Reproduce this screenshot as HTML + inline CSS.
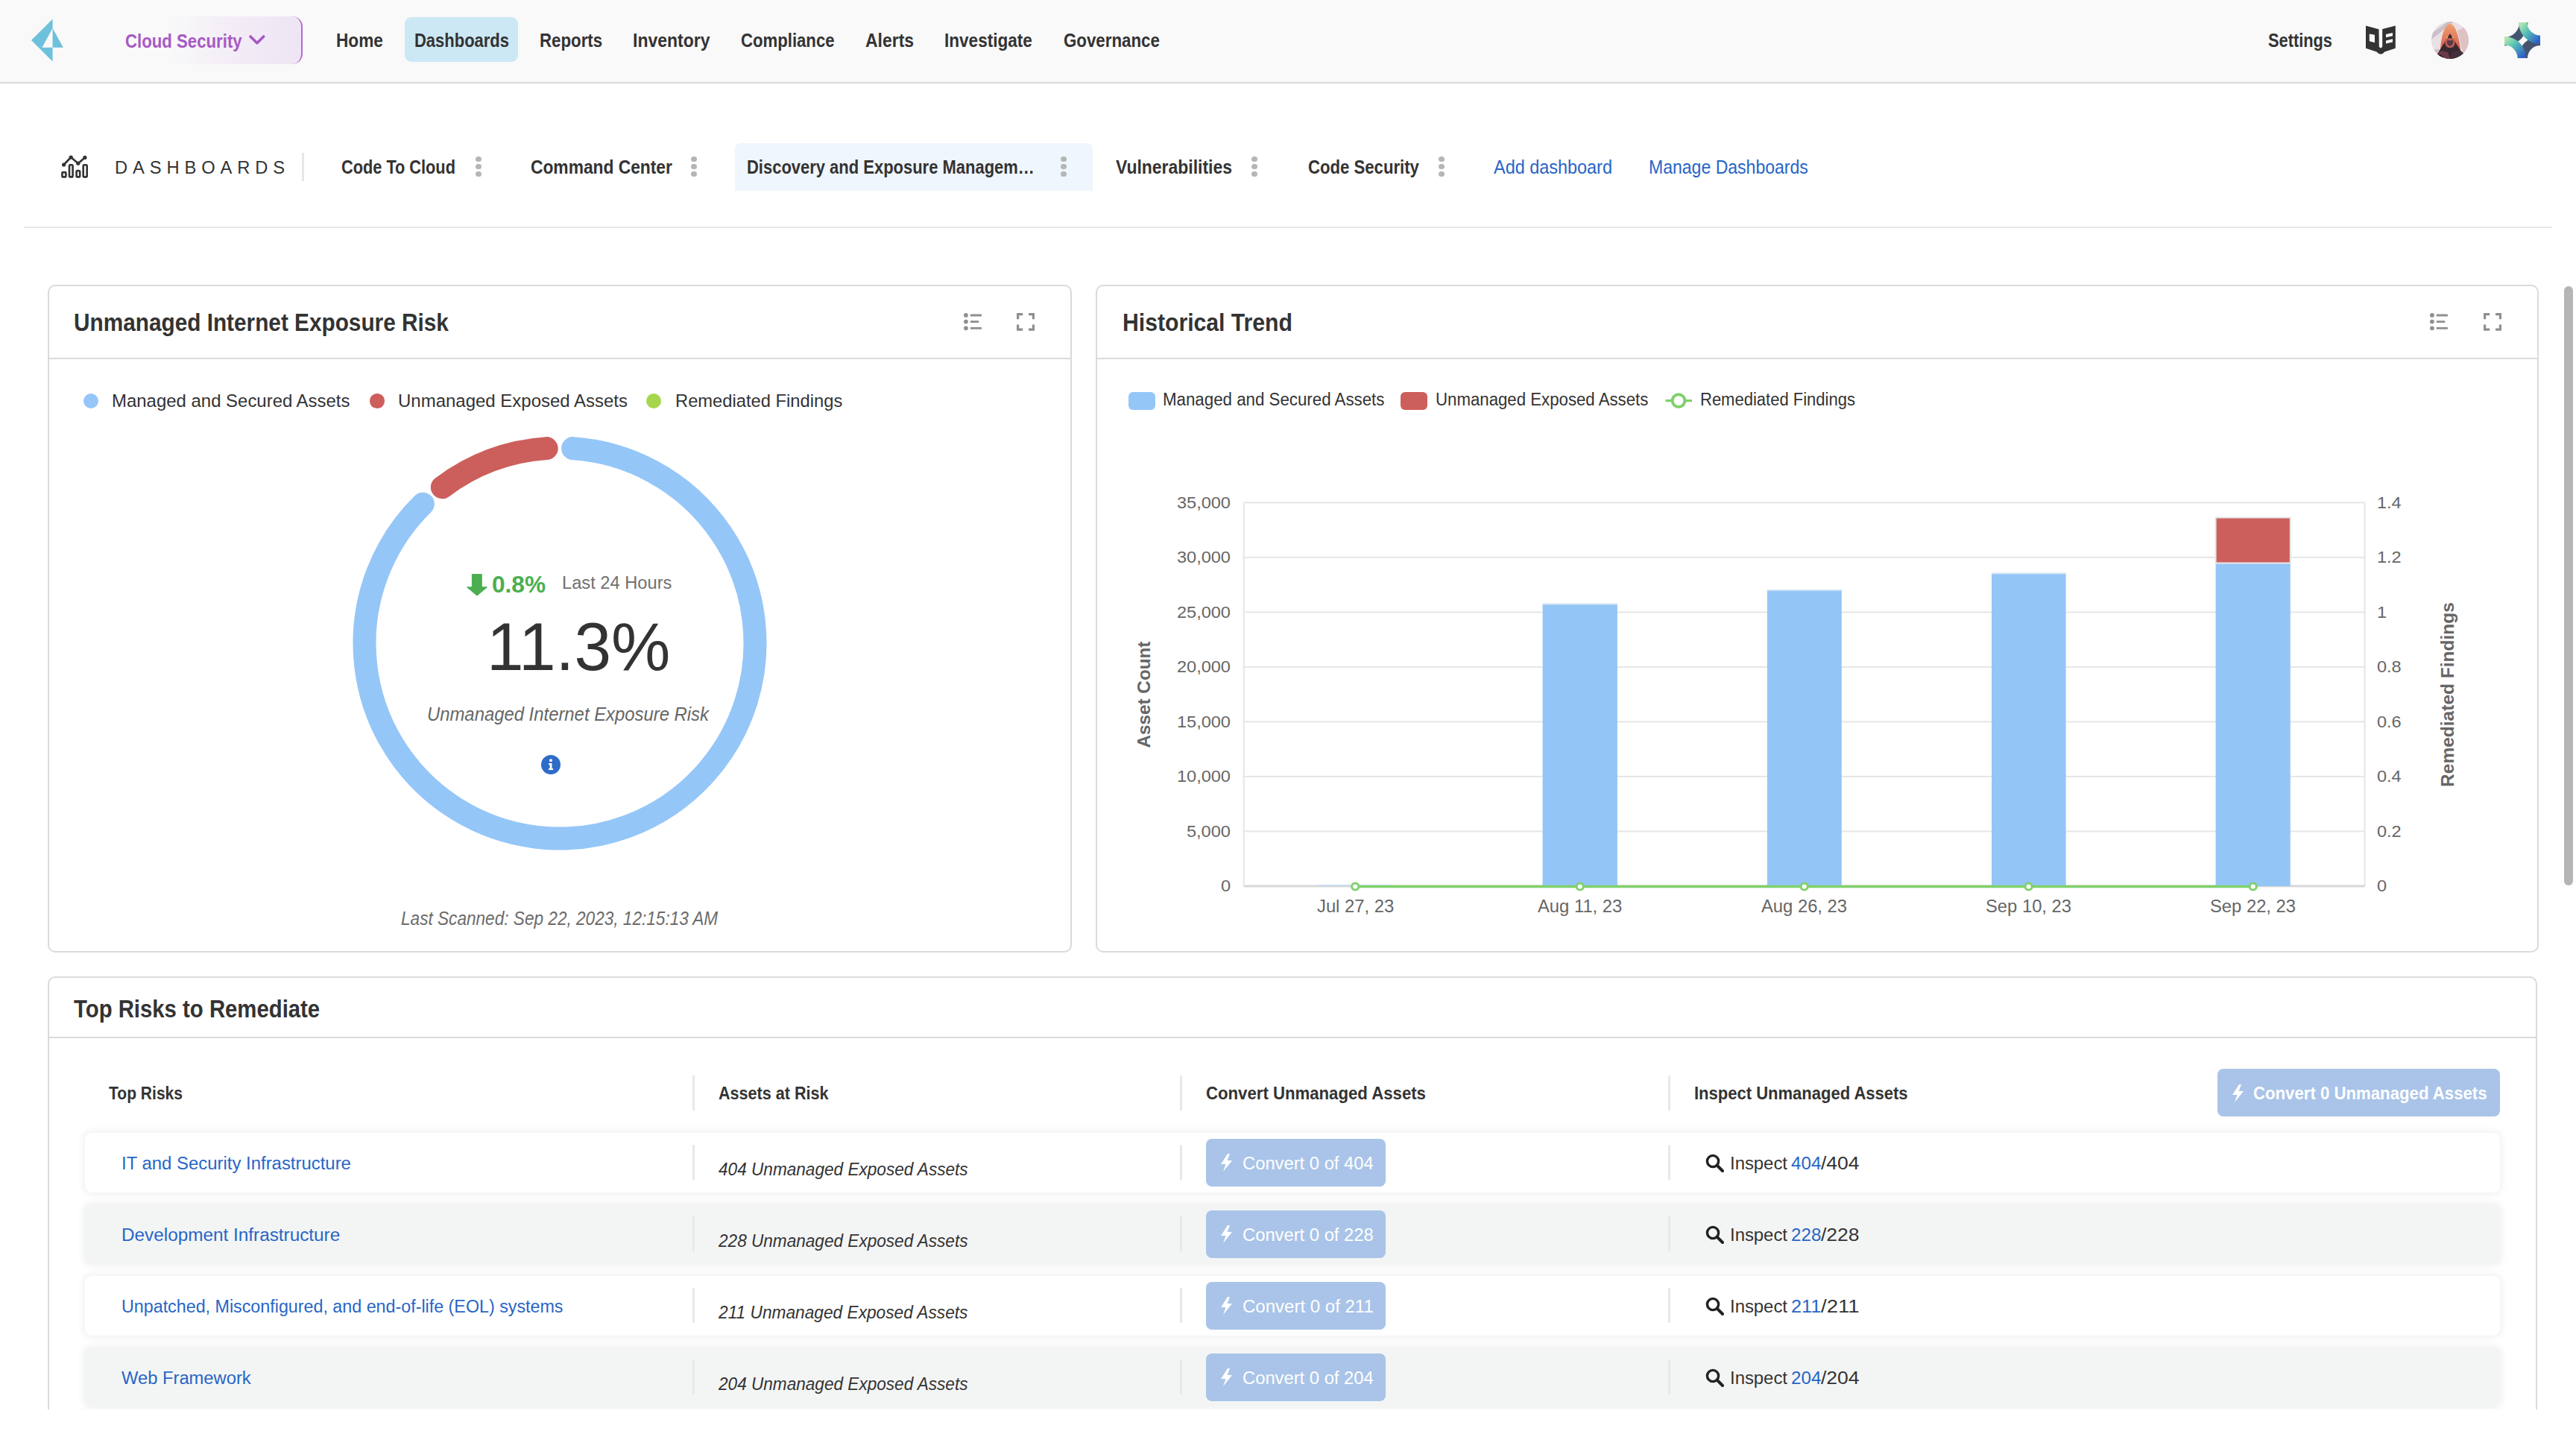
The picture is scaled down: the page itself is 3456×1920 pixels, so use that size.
<!DOCTYPE html>
<html><head><meta charset="utf-8"><title>Dashboards</title>
<style>
html,body{margin:0;padding:0;}
body{width:3456px;height:1920px;position:relative;overflow:hidden;background:#ffffff;font-family:"Liberation Sans",sans-serif;}
.t{position:absolute;white-space:pre;transform-origin:0 50%;}
.b{position:absolute;}
svg.b{overflow:visible;}
</style></head><body>
<div class="b" style="left:0px;top:0px;width:3456px;height:110px;background:#f9f9f9;border-bottom:2px solid #d8dbdb;box-sizing:border-box;height:112px;"></div>
<svg class="b" style="left:0;top:0" width="120" height="110" viewBox="0 0 120 110"><path fill="#6ec1dc" d="M70.6 25.6 L42 54 L70.6 82.4 L70.6 63.75 L84.8 63.75 L70.6 37.7 Z M70.6 37.7 L56.5 63.75 L70.6 63.75 Z" fill-rule="evenodd"/></svg>
<div class="b" style="left:112px;top:22px;width:294px;height:64px;border-radius:14px;background:linear-gradient(90deg,rgba(249,249,249,0) 0%,rgba(249,249,249,0) 40%,#f4eef7 65%,#eee4f4 100%);"></div>
<div class="b" style="left:390px;top:22px;width:16px;height:64px;border-radius:0 14px 14px 0;border-right:2px solid #b46ad0;box-sizing:border-box;"></div>
<div class="t" style="left:167.80px;top:42.65px;font-size:24.860px;line-height:24.860px;color:#a759c4;font-weight:bold;transform:scaleX(0.8931);">Cloud Security</div>
<svg class="b" style="left:330.75px;top:44.25px" width="30" height="24" viewBox="0 0 30 24"><path d="M5 5 L13.85 13.85 L22.7 5" fill="none" stroke="#a759c4" stroke-width="3.6" stroke-linecap="round" stroke-linejoin="round"/></svg>
<div class="b" style="left:543px;top:23px;width:152px;height:60px;background:#cce8f4;border-radius:9px;"></div>
<div class="t" style="left:451.30px;top:42.41px;font-size:25.140px;line-height:25.140px;color:#333333;font-weight:bold;transform:scaleX(0.9008);">Home</div>
<div class="t" style="left:555.60px;top:42.41px;font-size:25.140px;line-height:25.140px;color:#333333;font-weight:bold;transform:scaleX(0.8747);">Dashboards</div>
<div class="t" style="left:723.90px;top:42.41px;font-size:25.140px;line-height:25.140px;color:#333333;font-weight:bold;transform:scaleX(0.8856);">Reports</div>
<div class="t" style="left:849.40px;top:42.41px;font-size:25.140px;line-height:25.140px;color:#333333;font-weight:bold;transform:scaleX(0.9149);">Inventory</div>
<div class="t" style="left:994.30px;top:42.41px;font-size:25.140px;line-height:25.140px;color:#333333;font-weight:bold;transform:scaleX(0.8815);">Compliance</div>
<div class="t" style="left:1161.30px;top:42.41px;font-size:25.140px;line-height:25.140px;color:#333333;font-weight:bold;transform:scaleX(0.9134);">Alerts</div>
<div class="t" style="left:1267.40px;top:42.41px;font-size:25.140px;line-height:25.140px;color:#333333;font-weight:bold;transform:scaleX(0.8976);">Investigate</div>
<div class="t" style="left:1426.70px;top:42.41px;font-size:25.140px;line-height:25.140px;color:#333333;font-weight:bold;transform:scaleX(0.8871);">Governance</div>
<div class="t" style="left:3043.00px;top:42.41px;font-size:25.140px;line-height:25.140px;color:#333333;font-weight:bold;transform:scaleX(0.8671);">Settings</div>
<svg class="b" style="left:3165px;top:25px" width="60" height="60" viewBox="0 0 60 60"><path fill="#333" d="M9 9.4 L26.5 14.3 L26.8 37.5 Q29 41.5 31.2 37.5 L31.2 13.9 L48.8 9.4 L48.8 39.8 L34.4 44.4 Q29 51 23.5 44.4 L9 39.8 Z"/><path fill="#f9f9f9" d="M13.8 20.5 L21 21.8 L21 32.3 L13.8 30.2 Z M36 21 L45 18.9 L45 23.3 L36 25.2 Z M36 29.4 L45 27.3 L45 31.4 L36 33.5 Z"/></svg>
<svg class="b" style="left:3262px;top:29px" width="50" height="50" viewBox="0 0 50 50"><defs><clipPath id="av"><circle cx="25" cy="25" r="25"/></clipPath><linearGradient id="hood" x1="0" y1="0" x2="0" y2="1"><stop offset="0" stop-color="#f0a070"/><stop offset="1" stop-color="#d65a4c"/></linearGradient></defs><g clip-path="url(#av)"><rect width="50" height="50" fill="#eadfe2"/><path d="M0 16 L22 0 L30 0 L0 24 Z" fill="#cbbfca"/><path d="M35 12 L44 8 L52 20 L52 46 L42 42 Z" fill="#dcc2c3"/><path d="M0 45 L20 36 L0 38 Z" fill="#cbbfca"/><path d="M12 38 C13 20 18 3 25 3 C32 3 37 20 39 38 Z" fill="url(#hood)"/><path d="M25 16 L4 50 L46 50 Z" fill="#3a2830"/><circle cx="25" cy="28.5" r="6.6" fill="#c4605a"/><path d="M20.5 26 L23 24.5 L25 26 L27 24.5 L29.5 26 L28.5 31 L25 33 L21.5 31 Z" fill="#5a3840"/><circle cx="21" cy="21.2" r="1.2" fill="#f7b060"/><circle cx="29" cy="21.2" r="1.2" fill="#f7b060"/><path d="M0 50 L4 45 L14 39 L22 41 L25 50 Z" fill="#6a3c48"/><path d="M50 50 L46 45 L38 38 L28 40 L25 50 Z" fill="#43303a"/><path d="M2 48 C6 43 12 43 16 47 L16 52 L2 52 Z" fill="#2a2028"/></g></svg>
<svg class="b" style="left:3360px;top:30px" width="48" height="48" viewBox="0 0 48 48"><defs><linearGradient id="sg1" x1="0.2" y1="0" x2="1" y2="0.8"><stop offset="0" stop-color="#b0e4b0"/><stop offset="0.35" stop-color="#5cc6b4"/><stop offset="1" stop-color="#2d5fcb"/></linearGradient><linearGradient id="sg2" x1="0" y1="0.2" x2="0.8" y2="1"><stop offset="0" stop-color="#b0e4b0"/><stop offset="0.35" stop-color="#5cc6b4"/><stop offset="1" stop-color="#2d5fcb"/></linearGradient></defs><path fill="#44546f" d="M31.5 0 A31.5 31.5 0 0 1 0 31.5 L0 20 A20 20 0 0 0 20 0 Z"/><path fill="#44546f" d="M48 18.5 A29.5 29.5 0 0 0 18.5 48 L31 48 A17 17 0 0 1 48 31 Z"/><path fill="url(#sg1)" d="M19 0 A29 29 0 0 0 48 29 L48 17.5 A17.5 17.5 0 0 1 30.5 0 Z"/><path fill="url(#sg2)" d="M0 19 A29 29 0 0 1 29 48 L17.5 48 A17.5 17.5 0 0 0 0 30.5 Z"/></svg>
<svg class="b" style="left:78px;top:204px" width="44" height="40" viewBox="78 204 44 40"><g fill="none" stroke="#333" stroke-width="2.6" stroke-linejoin="round"><rect x="83.4" y="231.1" width="5" height="6.3" rx="1.5"/><rect x="93" y="221.3" width="4.6" height="16.1" rx="1.5"/><rect x="102.6" y="229.1" width="4.6" height="8.3" rx="1.5"/><rect x="111.7" y="221.3" width="5" height="16.1" rx="1.5"/><path d="M85.6 221 L95.2 211 L104.8 219.2 L113.9 211.4"/></g><g fill="#333"><circle cx="85.6" cy="221" r="2.6"/><circle cx="95.2" cy="211" r="2.6"/><circle cx="104.8" cy="219.2" r="2.6"/><circle cx="113.9" cy="211.4" r="2.6"/></g></svg>
<div class="t" style="left:153.80px;top:212.94px;font-size:24.162px;line-height:24.162px;color:#333333;letter-spacing:7px;transform:scaleX(0.9828);">DASHBOARDS</div>
<div class="b" style="left:405px;top:205px;width:3px;height:38px;background:#e6e6e6;"></div>
<div class="b" style="left:986px;top:192px;width:480px;height:64px;background:#eff6fd;border-radius:8px 8px 0 0;"></div>
<div class="t" style="left:458.00px;top:212.31px;font-size:25.140px;line-height:25.140px;color:#333333;font-weight:bold;transform:scaleX(0.8651);">Code To Cloud</div>
<div class="b" style="left:638.3px;top:209.5px;width:7.4px;height:7.4px;border-radius:50%;background:#b5b5b5;"></div>
<div class="b" style="left:638.3px;top:219.8px;width:7.4px;height:7.4px;border-radius:50%;background:#b5b5b5;"></div>
<div class="b" style="left:638.3px;top:230.1px;width:7.4px;height:7.4px;border-radius:50%;background:#b5b5b5;"></div>
<div class="t" style="left:712.00px;top:212.31px;font-size:25.140px;line-height:25.140px;color:#333333;font-weight:bold;transform:scaleX(0.9068);">Command Center</div>
<div class="b" style="left:927.3px;top:209.5px;width:7.4px;height:7.4px;border-radius:50%;background:#b5b5b5;"></div>
<div class="b" style="left:927.3px;top:219.8px;width:7.4px;height:7.4px;border-radius:50%;background:#b5b5b5;"></div>
<div class="b" style="left:927.3px;top:230.1px;width:7.4px;height:7.4px;border-radius:50%;background:#b5b5b5;"></div>
<div class="t" style="left:1002.00px;top:212.31px;font-size:25.140px;line-height:25.140px;color:#333333;font-weight:bold;transform:scaleX(0.8743);">Discovery and Exposure Managem…</div>
<div class="b" style="left:1423.3px;top:209.5px;width:7.4px;height:7.4px;border-radius:50%;background:#b5b5b5;"></div>
<div class="b" style="left:1423.3px;top:219.8px;width:7.4px;height:7.4px;border-radius:50%;background:#b5b5b5;"></div>
<div class="b" style="left:1423.3px;top:230.1px;width:7.4px;height:7.4px;border-radius:50%;background:#b5b5b5;"></div>
<div class="t" style="left:1497.00px;top:212.31px;font-size:25.140px;line-height:25.140px;color:#333333;font-weight:bold;transform:scaleX(0.9129);">Vulnerabilities</div>
<div class="b" style="left:1679.3px;top:209.5px;width:7.4px;height:7.4px;border-radius:50%;background:#b5b5b5;"></div>
<div class="b" style="left:1679.3px;top:219.8px;width:7.4px;height:7.4px;border-radius:50%;background:#b5b5b5;"></div>
<div class="b" style="left:1679.3px;top:230.1px;width:7.4px;height:7.4px;border-radius:50%;background:#b5b5b5;"></div>
<div class="t" style="left:1755.00px;top:212.31px;font-size:25.140px;line-height:25.140px;color:#333333;font-weight:bold;transform:scaleX(0.8813);">Code Security</div>
<div class="b" style="left:1930.3px;top:209.5px;width:7.4px;height:7.4px;border-radius:50%;background:#b5b5b5;"></div>
<div class="b" style="left:1930.3px;top:219.8px;width:7.4px;height:7.4px;border-radius:50%;background:#b5b5b5;"></div>
<div class="b" style="left:1930.3px;top:230.1px;width:7.4px;height:7.4px;border-radius:50%;background:#b5b5b5;"></div>
<div class="t" style="left:2004.00px;top:212.31px;font-size:25.140px;line-height:25.140px;color:#2865c7;transform:scaleX(0.9325);">Add dashboard</div>
<div class="t" style="left:2212.00px;top:212.31px;font-size:25.140px;line-height:25.140px;color:#2865c7;transform:scaleX(0.9168);">Manage Dashboards</div>
<div class="b" style="left:32px;top:304px;width:3392px;height:2px;background:#e6e6e6;"></div>
<div class="b" style="left:64px;top:382px;width:1374px;height:896px;border:2px solid #d9dbdb;border-radius:10px;box-sizing:border-box;background:#fff;"></div>
<div class="b" style="left:64px;top:480px;width:1374px;height:2px;background:#d9dbdb;"></div>
<div class="b" style="left:1470px;top:382px;width:1936px;height:896px;border:2px solid #d9dbdb;border-radius:10px;box-sizing:border-box;background:#fff;"></div>
<div class="b" style="left:1470px;top:480px;width:1936px;height:2px;background:#d9dbdb;"></div>
<div class="t" style="left:99.00px;top:416.22px;font-size:33.520px;line-height:33.520px;color:#333333;font-weight:bold;transform:scaleX(0.8882);">Unmanaged Internet Exposure Risk</div>
<div class="t" style="left:1505.60px;top:416.22px;font-size:33.520px;line-height:33.520px;color:#333333;font-weight:bold;transform:scaleX(0.9000);">Historical Trend</div>
<svg class="b" style="left:1292.5px;top:420px" width="25" height="24" viewBox="0 0 25 24"><g fill="#8f8f8f"><circle cx="2.9" cy="2.9" r="2.9"/><circle cx="2.9" cy="11.6" r="2.9"/><circle cx="2.9" cy="20.3" r="2.9"/><rect x="8.8" y="1.6" width="15.2" height="2.8" rx="0.6"/><rect x="8.8" y="10.2" width="11.5" height="2.8" rx="0.6"/><rect x="8.8" y="18.9" width="15.2" height="2.8" rx="0.6"/></g></svg>
<svg class="b" style="left:1364px;top:420px" width="25" height="25" viewBox="0 0 25 25"><g fill="none" stroke="#8f8f8f" stroke-width="3.2"><path d="M1.6 8.2 V1.6 H8.2"/><path d="M16 1.6 H22.4 V8.2"/><path d="M1.6 15.6 V22.2 H8.2"/><path d="M16 22.2 H22.4 V15.6"/></g></svg>
<svg class="b" style="left:3260px;top:420px" width="25" height="24" viewBox="0 0 25 24"><g fill="#8f8f8f"><circle cx="2.9" cy="2.9" r="2.9"/><circle cx="2.9" cy="11.6" r="2.9"/><circle cx="2.9" cy="20.3" r="2.9"/><rect x="8.8" y="1.6" width="15.2" height="2.8" rx="0.6"/><rect x="8.8" y="10.2" width="11.5" height="2.8" rx="0.6"/><rect x="8.8" y="18.9" width="15.2" height="2.8" rx="0.6"/></g></svg>
<svg class="b" style="left:3332px;top:420px" width="25" height="25" viewBox="0 0 25 25"><g fill="none" stroke="#8f8f8f" stroke-width="3.2"><path d="M1.6 8.2 V1.6 H8.2"/><path d="M16 1.6 H22.4 V8.2"/><path d="M1.6 15.6 V22.2 H8.2"/><path d="M16 22.2 H22.4 V15.6"/></g></svg>
<div class="b" style="left:112px;top:528px;width:20px;height:20px;border-radius:50%;background:#95c6f8;"></div>
<div class="t" style="left:150.40px;top:526.53px;font-size:23.464px;line-height:23.464px;color:#333333;transform:scaleX(1.0209);">Managed and Secured Assets</div>
<div class="b" style="left:496px;top:528px;width:19.5px;height:19.5px;border-radius:50%;background:#cc5f5c;"></div>
<div class="t" style="left:534.10px;top:526.53px;font-size:23.464px;line-height:23.464px;color:#333333;transform:scaleX(1.0225);">Unmanaged Exposed Assets</div>
<div class="b" style="left:867px;top:528px;width:20px;height:20px;border-radius:50%;background:#a6d64c;"></div>
<div class="t" style="left:906.30px;top:526.53px;font-size:23.464px;line-height:23.464px;color:#333333;transform:scaleX(1.0120);">Remediated Findings</div>
<svg class="b" style="left:0;top:0" width="1440" height="1280" viewBox="0 0 1440 1280"><path d="M768.59 601.59 A262 262 0 1 1 567.36 676.13" fill="none" stroke="#95c6f8" stroke-width="31" stroke-linecap="round"/><path d="M593.32 653.76 A262 262 0 0 1 733.18 601.61" fill="none" stroke="#cc5f5c" stroke-width="31" stroke-linecap="round"/></svg>
<svg class="b" style="left:625px;top:769px" width="30" height="32" viewBox="0 0 30 32"><path fill="#4cae50" stroke="#4cae50" stroke-width="1.2" stroke-linejoin="round" d="M8.5 1.7 H21.2 V18.8 H28.2 L15 29.8 L1.8 18.8 H8.5 Z"/></svg>
<div class="t" style="left:660.00px;top:768.40px;font-size:32.123px;line-height:32.123px;color:#4cae50;font-weight:bold;transform:scaleX(0.9831);">0.8%</div>
<div class="t" style="left:753.60px;top:770.39px;font-size:24.581px;line-height:24.581px;color:#707070;transform:scaleX(0.9633);">Last 24 Hours</div>
<div class="t" style="left:653.00px;top:823.33px;font-size:90.782px;line-height:90.782px;color:#333333;transform:scaleX(0.9829);">11.3%</div>
<div class="t" style="left:573.00px;top:946.25px;font-size:24.860px;line-height:24.860px;color:#666;font-style:italic;transform:scaleX(0.9597);">Unmanaged Internet Exposure Risk</div>
<svg class="b" style="left:726px;top:1013px" width="26" height="26" viewBox="0 0 26 26"><circle cx="13" cy="13" r="13" fill="#2e6cc7"/><circle cx="13" cy="7.3" r="2" fill="#fff"/><path d="M10 11 H14.5 V18 H16 V20 H10 V18 H11.6 V13 H10 Z" fill="#fff"/></svg>
<div class="t" style="left:538.00px;top:1220.31px;font-size:25.140px;line-height:25.140px;color:#6b6b6b;font-style:italic;transform:scaleX(0.8997);">Last Scanned: Sep 22, 2023, 12:15:13 AM</div>
<div class="b" style="left:1514px;top:526px;width:36px;height:24px;border-radius:6px;background:#95c6f8;"></div>
<div class="t" style="left:1560.40px;top:524.57px;font-size:23.184px;line-height:23.184px;color:#333333;transform:scaleX(0.9621);">Managed and Secured Assets</div>
<div class="b" style="left:1879px;top:526px;width:36px;height:24px;border-radius:6px;background:#cc5f5c;"></div>
<div class="t" style="left:1926.00px;top:524.57px;font-size:23.184px;line-height:23.184px;color:#333333;transform:scaleX(0.9589);">Unmanaged Exposed Assets</div>
<svg class="b" style="left:2230px;top:524px" width="44" height="28" viewBox="0 0 44 28"><path d="M4.5 13.6 H40" stroke="#7fd16b" stroke-width="3.4"/><circle cx="22" cy="13.6" r="8.4" fill="#fff" stroke="#7fd16b" stroke-width="4"/></svg>
<div class="t" style="left:2280.80px;top:524.57px;font-size:23.184px;line-height:23.184px;color:#333333;transform:scaleX(0.9494);">Remediated Findings</div>
<svg class="b" style="left:0;top:0" width="3456" height="1280" viewBox="0 0 3456 1280"><rect x="1668.7" y="673.40" width="1503.9" height="2" fill="#e6e6e6"/><rect x="1668.7" y="746.90" width="1503.9" height="2" fill="#e6e6e6"/><rect x="1668.7" y="820.40" width="1503.9" height="2" fill="#e6e6e6"/><rect x="1668.7" y="893.90" width="1503.9" height="2" fill="#e6e6e6"/><rect x="1668.7" y="967.40" width="1503.9" height="2" fill="#e6e6e6"/><rect x="1668.7" y="1040.90" width="1503.9" height="2" fill="#e6e6e6"/><rect x="1668.7" y="1114.40" width="1503.9" height="2" fill="#e6e6e6"/><rect x="1668.7" y="1187.90" width="1503.9" height="2" fill="#e6e6e6"/><rect x="1667.7" y="674.4" width="2" height="514.5" fill="#e6e6e6"/><rect x="3171.6" y="674.4" width="2" height="514.5" fill="#e6e6e6"/><rect x="1668.7" y="1187.4" width="1503.9" height="3" fill="#d8d8d8"/><rect x="1768" y="1187" width="100.0" height="2" fill="#c9dcef"/><rect x="2069.6" y="810.5" width="100.3" height="378.4" fill="#94c5f7"/><rect x="2069.6" y="809.5" width="100.3" height="2" fill="#d4e4f4"/><rect x="2370.9" y="791.8" width="99.9" height="397.1" fill="#94c5f7"/><rect x="2370.9" y="790.8" width="99.9" height="2" fill="#d4e4f4"/><rect x="2672" y="769.4" width="99.6" height="419.5" fill="#94c5f7"/><rect x="2672" y="768.4" width="99.6" height="2" fill="#d4e4f4"/><rect x="2972.6" y="755.4" width="100.2" height="433.5" fill="#94c5f7"/><rect x="2972.6" y="754.4" width="100.2" height="2" fill="#d4e4f4"/><rect x="2972.6" y="694.5" width="100.2" height="60.9" fill="#cc5f5c" stroke="#e3e3e3" stroke-width="2"/><path d="M1818.2 1189.5 H3022.7" stroke="#7fd16b" stroke-width="3.4"/><circle cx="1818.2" cy="1189.5" r="4.6" fill="#fff" stroke="#7fd16b" stroke-width="3"/><circle cx="2119.8" cy="1189.5" r="4.6" fill="#fff" stroke="#7fd16b" stroke-width="3"/><circle cx="2420.7" cy="1189.5" r="4.6" fill="#fff" stroke="#7fd16b" stroke-width="3"/><circle cx="2721.6" cy="1189.5" r="4.6" fill="#fff" stroke="#7fd16b" stroke-width="3"/><circle cx="3022.7" cy="1189.5" r="4.6" fill="#fff" stroke="#7fd16b" stroke-width="3"/></svg>
<div class="t" style="left:1637.94px;top:1178.34px;font-size:22.626px;line-height:22.626px;color:#666;transform:scaleX(1.0400);">0</div>
<div class="t" style="left:3189.40px;top:1178.34px;font-size:22.626px;line-height:22.626px;color:#666;transform:scaleX(1.0400);">0</div>
<div class="t" style="left:1592.11px;top:1104.84px;font-size:22.626px;line-height:22.626px;color:#666;transform:scaleX(1.0400);">5,000</div>
<div class="t" style="left:3189.40px;top:1104.84px;font-size:22.626px;line-height:22.626px;color:#666;transform:scaleX(1.0400);">0.2</div>
<div class="t" style="left:1579.05px;top:1031.34px;font-size:22.626px;line-height:22.626px;color:#666;transform:scaleX(1.0400);">10,000</div>
<div class="t" style="left:3189.40px;top:1031.34px;font-size:22.626px;line-height:22.626px;color:#666;transform:scaleX(1.0400);">0.4</div>
<div class="t" style="left:1579.05px;top:957.84px;font-size:22.626px;line-height:22.626px;color:#666;transform:scaleX(1.0400);">15,000</div>
<div class="t" style="left:3189.40px;top:957.84px;font-size:22.626px;line-height:22.626px;color:#666;transform:scaleX(1.0400);">0.6</div>
<div class="t" style="left:1579.05px;top:884.34px;font-size:22.626px;line-height:22.626px;color:#666;transform:scaleX(1.0400);">20,000</div>
<div class="t" style="left:3189.40px;top:884.34px;font-size:22.626px;line-height:22.626px;color:#666;transform:scaleX(1.0400);">0.8</div>
<div class="t" style="left:1579.05px;top:810.84px;font-size:22.626px;line-height:22.626px;color:#666;transform:scaleX(1.0400);">25,000</div>
<div class="t" style="left:3189.40px;top:810.84px;font-size:22.626px;line-height:22.626px;color:#666;transform:scaleX(1.0400);">1</div>
<div class="t" style="left:1579.05px;top:737.34px;font-size:22.626px;line-height:22.626px;color:#666;transform:scaleX(1.0400);">30,000</div>
<div class="t" style="left:3189.40px;top:737.34px;font-size:22.626px;line-height:22.626px;color:#666;transform:scaleX(1.0400);">1.2</div>
<div class="t" style="left:1579.05px;top:663.84px;font-size:22.626px;line-height:22.626px;color:#666;transform:scaleX(1.0400);">35,000</div>
<div class="t" style="left:3189.40px;top:663.84px;font-size:22.626px;line-height:22.626px;color:#666;transform:scaleX(1.0400);">1.4</div>
<div class="t" style="left:1766.60px;top:1205.33px;font-size:23.464px;line-height:23.464px;color:#666;transform:scaleX(1.0140);">Jul 27, 23</div>
<div class="t" style="left:2062.64px;top:1205.33px;font-size:23.464px;line-height:23.464px;color:#666;transform:scaleX(1.0140);">Aug 11, 23</div>
<div class="t" style="left:2362.85px;top:1205.33px;font-size:23.464px;line-height:23.464px;color:#666;transform:scaleX(1.0140);">Aug 26, 23</div>
<div class="t" style="left:2663.95px;top:1205.33px;font-size:23.464px;line-height:23.464px;color:#666;transform:scaleX(1.0140);">Sep 10, 23</div>
<div class="t" style="left:2965.05px;top:1205.33px;font-size:23.464px;line-height:23.464px;color:#666;transform:scaleX(1.0140);">Sep 22, 23</div>
<div class="t" style="left:1535.6px;top:931.5px;font-size:23.5px;line-height:23.5px;font-weight:bold;color:#666;transform:translate(-50%,-50%) rotate(-90deg) scaleX(1.032);transform-origin:50% 50%;white-space:nowrap">Asset Count</div>
<div class="t" style="left:3285px;top:931.5px;font-size:23.5px;line-height:23.5px;font-weight:bold;color:#666;transform:translate(-50%,-50%) rotate(-90deg) scaleX(1.043);transform-origin:50% 50%;white-space:nowrap">Remediated Findings</div>
<div class="b" style="left:64px;top:1310px;width:3340px;height:700px;border:2px solid #d9dbdb;border-radius:10px;box-sizing:border-box;background:#fff;"></div>
<div class="b" style="left:64px;top:1391px;width:3340px;height:2px;background:#d9dbdb;"></div>
<div class="t" style="left:98.50px;top:1336.72px;font-size:33.520px;line-height:33.520px;color:#333333;font-weight:bold;transform:scaleX(0.8747);">Top Risks to Remediate</div>
<div class="t" style="left:146.00px;top:1455.29px;font-size:24.581px;line-height:24.581px;color:#333333;font-weight:bold;transform:scaleX(0.8560);">Top Risks</div>
<div class="t" style="left:964.00px;top:1455.29px;font-size:24.581px;line-height:24.581px;color:#333333;font-weight:bold;transform:scaleX(0.8782);">Assets at Risk</div>
<div class="t" style="left:1618.00px;top:1455.29px;font-size:24.581px;line-height:24.581px;color:#333333;font-weight:bold;transform:scaleX(0.9023);">Convert Unmanaged Assets</div>
<div class="t" style="left:2273.40px;top:1455.29px;font-size:24.581px;line-height:24.581px;color:#333333;font-weight:bold;transform:scaleX(0.8953);">Inspect Unmanaged Assets</div>
<div class="b" style="left:929px;top:1443px;width:3px;height:47px;background:#e8e8e8;"></div>
<div class="b" style="left:1583px;top:1443px;width:3px;height:47px;background:#e8e8e8;"></div>
<div class="b" style="left:2238px;top:1443px;width:3px;height:47px;background:#e8e8e8;"></div>
<div class="b" style="left:2975px;top:1434px;width:379px;height:64px;background:#a9c4e8;border-radius:8px;"></div>
<svg class="b" style="left:2992px;top:1454px" width="22" height="26" viewBox="0 0 22 26"><path fill="#fff" d="M12 1 L3 15 H9.5 L6 25 L18 10 H11.5 L15 1 Z"/></svg>
<div class="t" style="left:3023.00px;top:1455.29px;font-size:24.581px;line-height:24.581px;color:#fff;font-weight:bold;transform:scaleX(0.9026);">Convert 0 Unmanaged Assets</div>
<div class="b" style="left:0;top:0;width:3456px;height:1891px;overflow:hidden">
<div class="b" style="left:114px;top:1520px;width:3240px;height:80px;background:#ffffff;border-radius:9px;box-shadow:0 0 10px 3px rgba(0,0,0,0.055);"></div>
<div class="t" style="left:163.00px;top:1548.59px;font-size:24.581px;line-height:24.581px;color:#2865c7;transform:scaleX(0.9730);">IT and Security Infrastructure</div>
<div class="b" style="left:929px;top:1536px;width:3px;height:47px;background:#e8e8e8;"></div>
<div class="b" style="left:1583px;top:1536px;width:3px;height:47px;background:#e8e8e8;"></div>
<div class="b" style="left:2238px;top:1536px;width:3px;height:47px;background:#e8e8e8;"></div>
<div class="t" style="left:964.00px;top:1557.02px;font-size:24.302px;line-height:24.302px;color:#333333;font-style:italic;transform:scaleX(0.9303);">404 Unmanaged Exposed Assets</div>
<div class="b" style="left:1618px;top:1528px;width:241px;height:64px;background:#a9c4e8;border-radius:8px;"></div>
<svg class="b" style="left:1635px;top:1547px" width="22" height="26" viewBox="0 0 22 26"><path fill="#fff" d="M12 1 L3 15 H9.5 L6 25 L18 10 H11.5 L15 1 Z"/></svg>
<div class="t" style="left:1666.70px;top:1549.29px;font-size:24.581px;line-height:24.581px;color:#fff;transform:scaleX(0.9671);">Convert 0 of 404</div>
<svg class="b" style="left:2287px;top:1547px" width="28" height="28" viewBox="0 0 28 28"><circle cx="11" cy="11" r="7.6" fill="none" stroke="#222" stroke-width="3.4"/><path d="M16.5 16.5 L24 24" stroke="#222" stroke-width="4" stroke-linecap="round"/></svg>
<div class="t" style="left:2321.00px;top:1548.79px;font-size:24.581px;line-height:24.581px;color:#333333;transform:scaleX(0.9713);">Inspect</div>
<div class="t" style="left:2402.70px;top:1548.79px;font-size:24.581px;line-height:24.581px;color:#2865c7;transform:scaleX(0.9832);">404</div>
<div class="t" style="left:2443.00px;top:1548.79px;font-size:24.581px;line-height:24.581px;color:#333333;transform:scaleX(1.0779);">/404</div>
<div class="b" style="left:114px;top:1616px;width:3240px;height:80px;background:#f3f5f5;border-radius:9px;box-shadow:0 0 10px 3px rgba(0,0,0,0.055);"></div>
<div class="t" style="left:163.00px;top:1644.59px;font-size:24.581px;line-height:24.581px;color:#2865c7;transform:scaleX(0.9892);">Development Infrastructure</div>
<div class="b" style="left:929px;top:1632px;width:3px;height:47px;background:#e8e8e8;"></div>
<div class="b" style="left:1583px;top:1632px;width:3px;height:47px;background:#e8e8e8;"></div>
<div class="b" style="left:2238px;top:1632px;width:3px;height:47px;background:#e8e8e8;"></div>
<div class="t" style="left:964.17px;top:1653.02px;font-size:24.302px;line-height:24.302px;color:#333333;font-style:italic;transform:scaleX(0.9298);">228 Unmanaged Exposed Assets</div>
<div class="b" style="left:1618px;top:1624px;width:241px;height:64px;background:#a9c4e8;border-radius:8px;"></div>
<svg class="b" style="left:1635px;top:1643px" width="22" height="26" viewBox="0 0 22 26"><path fill="#fff" d="M12 1 L3 15 H9.5 L6 25 L18 10 H11.5 L15 1 Z"/></svg>
<div class="t" style="left:1666.70px;top:1645.29px;font-size:24.581px;line-height:24.581px;color:#fff;transform:scaleX(0.9671);">Convert 0 of 228</div>
<svg class="b" style="left:2287px;top:1643px" width="28" height="28" viewBox="0 0 28 28"><circle cx="11" cy="11" r="7.6" fill="none" stroke="#222" stroke-width="3.4"/><path d="M16.5 16.5 L24 24" stroke="#222" stroke-width="4" stroke-linecap="round"/></svg>
<div class="t" style="left:2321.00px;top:1644.79px;font-size:24.581px;line-height:24.581px;color:#333333;transform:scaleX(0.9713);">Inspect</div>
<div class="t" style="left:2402.70px;top:1644.79px;font-size:24.581px;line-height:24.581px;color:#2865c7;transform:scaleX(0.9832);">228</div>
<div class="t" style="left:2443.00px;top:1644.79px;font-size:24.581px;line-height:24.581px;color:#333333;transform:scaleX(1.0779);">/228</div>
<div class="b" style="left:114px;top:1712px;width:3240px;height:80px;background:#ffffff;border-radius:9px;box-shadow:0 0 10px 3px rgba(0,0,0,0.055);"></div>
<div class="t" style="left:163.00px;top:1740.59px;font-size:24.581px;line-height:24.581px;color:#2865c7;transform:scaleX(0.9470);">Unpatched, Misconfigured, and end-of-life (EOL) systems</div>
<div class="b" style="left:929px;top:1728px;width:3px;height:47px;background:#e8e8e8;"></div>
<div class="b" style="left:1583px;top:1728px;width:3px;height:47px;background:#e8e8e8;"></div>
<div class="b" style="left:2238px;top:1728px;width:3px;height:47px;background:#e8e8e8;"></div>
<div class="t" style="left:964.17px;top:1749.02px;font-size:24.302px;line-height:24.302px;color:#333333;font-style:italic;transform:scaleX(0.9344);">211 Unmanaged Exposed Assets</div>
<div class="b" style="left:1618px;top:1720px;width:241px;height:64px;background:#a9c4e8;border-radius:8px;"></div>
<svg class="b" style="left:1635px;top:1739px" width="22" height="26" viewBox="0 0 22 26"><path fill="#fff" d="M12 1 L3 15 H9.5 L6 25 L18 10 H11.5 L15 1 Z"/></svg>
<div class="t" style="left:1666.70px;top:1741.29px;font-size:24.581px;line-height:24.581px;color:#fff;transform:scaleX(0.9770);">Convert 0 of 211</div>
<svg class="b" style="left:2287px;top:1739px" width="28" height="28" viewBox="0 0 28 28"><circle cx="11" cy="11" r="7.6" fill="none" stroke="#222" stroke-width="3.4"/><path d="M16.5 16.5 L24 24" stroke="#222" stroke-width="4" stroke-linecap="round"/></svg>
<div class="t" style="left:2321.00px;top:1740.79px;font-size:24.581px;line-height:24.581px;color:#333333;transform:scaleX(0.9713);">Inspect</div>
<div class="t" style="left:2402.70px;top:1740.79px;font-size:24.581px;line-height:24.581px;color:#2865c7;transform:scaleX(1.0279);">211</div>
<div class="t" style="left:2443.00px;top:1740.79px;font-size:24.581px;line-height:24.581px;color:#333333;transform:scaleX(1.1211);">/211</div>
<div class="b" style="left:114px;top:1808px;width:3240px;height:80px;background:#f3f5f5;border-radius:9px;box-shadow:0 0 10px 3px rgba(0,0,0,0.055);"></div>
<div class="t" style="left:163.00px;top:1836.59px;font-size:24.581px;line-height:24.581px;color:#2865c7;transform:scaleX(0.9659);">Web Framework</div>
<div class="b" style="left:929px;top:1824px;width:3px;height:47px;background:#e8e8e8;"></div>
<div class="b" style="left:1583px;top:1824px;width:3px;height:47px;background:#e8e8e8;"></div>
<div class="b" style="left:2238px;top:1824px;width:3px;height:47px;background:#e8e8e8;"></div>
<div class="t" style="left:964.17px;top:1845.02px;font-size:24.302px;line-height:24.302px;color:#333333;font-style:italic;transform:scaleX(0.9298);">204 Unmanaged Exposed Assets</div>
<div class="b" style="left:1618px;top:1816px;width:241px;height:64px;background:#a9c4e8;border-radius:8px;"></div>
<svg class="b" style="left:1635px;top:1835px" width="22" height="26" viewBox="0 0 22 26"><path fill="#fff" d="M12 1 L3 15 H9.5 L6 25 L18 10 H11.5 L15 1 Z"/></svg>
<div class="t" style="left:1666.70px;top:1837.29px;font-size:24.581px;line-height:24.581px;color:#fff;transform:scaleX(0.9671);">Convert 0 of 204</div>
<svg class="b" style="left:2287px;top:1835px" width="28" height="28" viewBox="0 0 28 28"><circle cx="11" cy="11" r="7.6" fill="none" stroke="#222" stroke-width="3.4"/><path d="M16.5 16.5 L24 24" stroke="#222" stroke-width="4" stroke-linecap="round"/></svg>
<div class="t" style="left:2321.00px;top:1836.79px;font-size:24.581px;line-height:24.581px;color:#333333;transform:scaleX(0.9713);">Inspect</div>
<div class="t" style="left:2402.70px;top:1836.79px;font-size:24.581px;line-height:24.581px;color:#2865c7;transform:scaleX(0.9832);">204</div>
<div class="t" style="left:2443.00px;top:1836.79px;font-size:24.581px;line-height:24.581px;color:#333333;transform:scaleX(1.0779);">/204</div>
</div>
<div class="b" style="left:0px;top:1891px;width:3456px;height:29px;background:#fff;"></div>
<div class="b" style="left:3440px;top:384px;width:12px;height:804px;background:#b5b5b5;border-radius:6px;"></div>
</body></html>
